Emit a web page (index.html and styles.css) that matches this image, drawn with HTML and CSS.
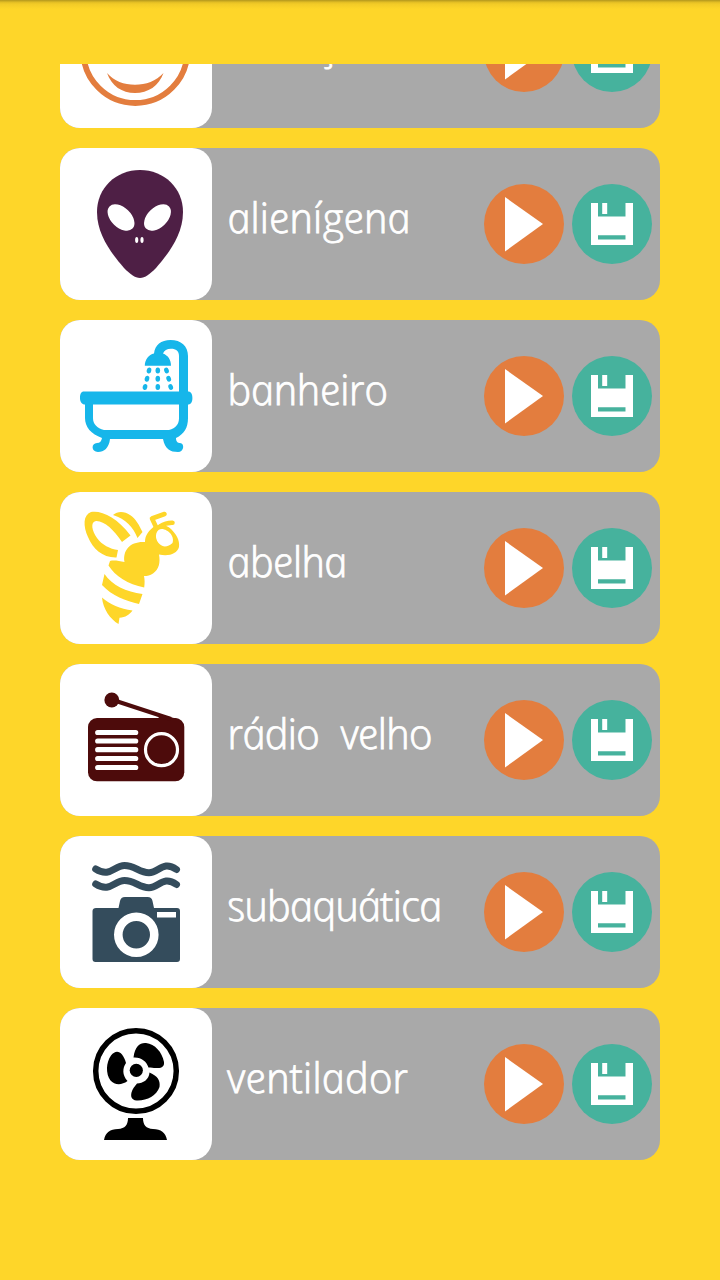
FILE: index.html
```
<!DOCTYPE html>
<html lang="pt">
<head>
<meta charset="utf-8">
<title>Sons</title>
<link rel="stylesheet" href="styles.css">
</head>
<body>
<svg class="defs" aria-hidden="true">
  <symbol id="play" viewBox="0 0 80 80"><path d="M21 13v54.500L59 40z"/></symbol>
  <symbol id="save" viewBox="0 0 80 80"><path fill-rule="evenodd" d="M19 19h7v13.500h27.500V19H61v42H19zM26 51.300h27.500v4.200H26z"/><path d="M30.200 19h5v11h-5z"/></symbol>
</svg>
<main class="list">
  <article class="row">
    <svg class="tile smile" viewBox="0 0 152 152"><circle cx="75.300" cy="75" r="52" fill="none" stroke="currentColor" stroke-width="5.800"/><path d="M47 97c7 8 17 11.800 28 11.800S96 105 103.500 97C99 110 88 117 75 117S51.500 110 47 97z"/></svg>
    <span class="label w-crianca">criança</span>
    <button class="btn play"><svg><use href="#play"/></svg></button>
    <button class="btn save"><svg><use href="#save"/></svg></button>
  </article>
  <article class="row">
    <svg class="tile alien" viewBox="0 0 152 152"><path d="M80 22C56 22 37 40 37 64c0 24 16 43 27 56 6 6 11 10 16 10s10-4 16-10c11-13 27-32 27-56 0-24-19-42-43-42z"/><g fill="#fff"><ellipse cx="61" cy="69.500" rx="16" ry="10" transform="rotate(44 61 69.500)"/><ellipse cx="97.500" cy="69.500" rx="16" ry="10" transform="rotate(-44 97.500 69.500)"/><ellipse cx="76.700" cy="92" rx="1.600" ry="3"/><ellipse cx="82" cy="92" rx="1.600" ry="3"/></g></svg>
    <span class="label w-alien">alienígena</span>
    <button class="btn play"><svg><use href="#play"/></svg></button>
    <button class="btn save"><svg><use href="#save"/></svg></button>
  </article>
  <article class="row">
    <svg class="tile bath" viewBox="0 0 152 152"><path d="M24 71.500h95V36c0-5-3-7.300-8-7.300-4 0-7 1.800-8 4.800 5 2 8 6 8 12.200H84.800c0-6 4-11 9.200-12.200C95 25 101 20 110.500 20 121 20 128 26 128 36v35.500c3 0 4.400 2.500 4.400 6.500s-1.400 6.500-4.400 6.500V98c0 10-4 16-12 20 0 4 2 5 4 5 5 .500 4 9-2 9-8 0-13-3-15-13H50c-1 9-6 13-12 13-7 0-7-9-1-9 3 0 4.500-2 5-5-11-4-17-11-17-20V84.500c-3 0-5-2.500-5-6.500s1-6.500 4-6.500zM33 84.500V98c0 6 4 10 11 12h65c7-2 10-6 10-12V84.500z"/><g><ellipse cx="89" cy="50.500" rx="2.300" ry="3" transform="rotate(12 89 50.500)"/><ellipse cx="97.800" cy="50.500" rx="2.300" ry="3"/><ellipse cx="106.500" cy="50.500" rx="2.300" ry="3" transform="rotate(-20 106.500 50.500)"/><ellipse cx="87" cy="58.700" rx="2.300" ry="3" transform="rotate(12 87 58.700)"/><ellipse cx="97.800" cy="58.700" rx="2.300" ry="3"/><ellipse cx="108.700" cy="58.700" rx="2.300" ry="3" transform="rotate(-20 108.700 58.700)"/><ellipse cx="85" cy="67" rx="2.300" ry="3" transform="rotate(12 85 67)"/><ellipse cx="97.800" cy="67" rx="2.300" ry="3"/><ellipse cx="110.700" cy="67" rx="2.300" ry="3" transform="rotate(-20 110.700 67)"/></g></svg>
    <span class="label w-bath">banheiro</span>
    <button class="btn play"><svg><use href="#play"/></svg></button>
    <button class="btn save"><svg><use href="#save"/></svg></button>
  </article>
  <article class="row">
    <svg class="tile bee" viewBox="0 0 152 152"><path fill-rule="evenodd" d="M31 20c10-2 26 5 39.500 23.500L62 50C54 38 44 28.500 36 29c-6 1-4 10 1 17 5 7 13 11 21 12l-1.500 7.500C43 66 33 57 28 45c-5-11-5-22 3-25z"/><path d="M53 23c5-4.500 12-3.500 17 0 6 4 9 10 12.500 17L77.500 46C73 35 66 27 53 23z"/><path fill-rule="evenodd" d="M50 69c4-1 9 0 14.500 1-2-12 6-21 20.500-20 0-7 4-12 10-16 6-2 12-1 16 3 5 5 9 11 8 18-2 7-10 9.500-20 7.500 1.500 8 0 15-6 19-3 2-5.500 2.500-9 2.500.800 3.500.800 7.500.200 11.500C68 92.500 55 84 48.500 73.500zM98.500 38c-4 4-3 10 1 14s9 2.500 13-1c2-5-2-11-6-12.500-3-2-6-2-8-.500z"/><path d="M96 35l-4-8.500 12.500-4.500M100 34.500q6-4 12.500-3.800" fill="none" stroke="currentColor" stroke-width="4.600" stroke-linecap="round" stroke-linejoin="round"/><path d="M44.500 82C52 93 66 100 82.500 102l-3.500 10C66 109 52 104 42 93zM42 105.500c8 7 18 11.500 30.500 13-3 4-7 7-13 7.200L58.500 132C50 127 43 117 42 105.500z"/></svg>
    <span class="label w-bee">abelha</span>
    <button class="btn play"><svg><use href="#play"/></svg></button>
    <button class="btn save"><svg><use href="#save"/></svg></button>
  </article>
  <article class="row">
    <svg class="tile radio" viewBox="0 0 152 152"><rect x="28" y="54" width="96.300" height="63.300" rx="9"/><circle cx="51.800" cy="36" r="7.400"/><path d="M56 37l55 18" stroke="currentColor" stroke-width="4"/><path d="M100 50.500l18 4.500H98z"/><path d="M37.700 68.500h38M37.700 77h38M37.700 85.700h38M37.700 94.500h38M37.700 103.500h38" stroke="#fff" stroke-width="5.200" stroke-linecap="round"/><circle cx="101.500" cy="85.700" r="16" fill="none" stroke="#fff" stroke-width="3.200"/></svg>
    <span class="label w-radio">rádio velho</span>
    <button class="btn play"><svg><use href="#play"/></svg></button>
    <button class="btn save"><svg><use href="#save"/></svg></button>
  </article>
  <article class="row">
    <svg class="tile camera" viewBox="0 0 152 152"><path d="M35.700 33C50 42 54 29.500 64.500 29.500S79 36.700 89 36.700 103 24 116.500 33.500M35.700 48C50 57 54 44.500 64.500 44.500S79 51.700 89 51.700 103 39 116.500 48.500" fill="none" stroke="currentColor" stroke-width="7" stroke-linecap="round"/><path d="M36 72h22.500l1.500-7c.800-2.700 2-4 5-4h22.500c3 0 4.500 1.300 5 4l1.500 7H117c2 0 3 1 3 3v48c0 2-1 3-3 3H35.500c-2 0-3-1-3-3V75c0-2 1.500-3 3.500-3z"/><circle cx="76.300" cy="98.700" r="18" fill="none" stroke="#fff" stroke-width="8.600"/><path d="M97 76h19v5.500H97z" fill="#fff"/></svg>
    <span class="label w-water">subaquática</span>
    <button class="btn play"><svg><use href="#play"/></svg></button>
    <button class="btn save"><svg><use href="#save"/></svg></button>
  </article>
  <article class="row">
    <svg class="tile fan" viewBox="0 0 152 152"><circle cx="76" cy="63" r="40.300" fill="none" stroke="currentColor" stroke-width="5.500"/><circle cx="76.300" cy="62.300" r="6.600"/><path d="M73.500 49.500C75 38 80 34.500 86 35c9 1 16 9 18 19 .500 4-2 6-6 6-4 .200-6-.200-9.500-.500-2-6-7-10.500-15-10zM89.500 64.500C98 68 100.500 73 99.500 79c-3 9-13 14-23 13.500-5-.500-6-4-5-8 1-3.500 3-6 5.500-9 6 0 12-4 12.500-11zM67.500 73c-6 4.500-13 4-17-.500-5-7-4.500-18 .500-25 4-5 8-4.500 11-1 2 3 3 5 4 8.500-3.500 5-4 12 1.500 18z"/><path d="M68 110h15c0 7 3 10.500 10 11 8 .500 12.500 3 14 11H44c1.500-8 6-10.500 14-11 7-.500 10-4 10-11z"/></svg>
    <span class="label w-fan">ventilador</span>
    <button class="btn play"><svg><use href="#play"/></svg></button>
    <button class="btn save"><svg><use href="#save"/></svg></button>
  </article>
</main>
</body>
</html>
```
FILE: styles.css
```
* { box-sizing: border-box; }
body {
  margin: 0;
  height: 1280px;
  padding: 64px 60px 0;
  overflow: hidden;
  background: linear-gradient(#b69a1e 0, #c4a520 1px, #e0bc24 2px, #f2cb27 4px, #fed629 9px) #fed629;
}
.defs { display: none; }
/* The scrolled list is clipped at its top edge. */
.list {
  height: 1096px;
  display: flex;
  flex-direction: column;
  justify-content: flex-end;
  gap: 20px;
  overflow: hidden;
}
.row {
  flex: none;
  height: 152px;
  display: flex;
  align-items: center;
  gap: 8px;
  padding-right: 8px;
  border-radius: 20px;
  background: #a9a9a9;
}
.tile {
  flex: none;
  width: 152px;
  height: 152px;
  border-radius: 20px;
  background: #fff;
  fill: currentColor;
}
.smile { color: #e37d3e; }
.alien { color: #4e1f45; }
.bath { color: #16b6ea; }
.bee { color: #fed629; }
.radio { color: #4d0b0b; }
.camera { color: #344c5c; }
.fan { color: #000; }
/* Counter-skewed italic gives upright single-storey letters. */
.label {
  flex: 1;
  min-width: 0;
  padding: 0 0 15px 8px;
  color: #fff;
  font: italic 300 42px/56px "Open Sans", "Noto Sans", sans-serif;
  -webkit-text-stroke: 0.8px #fff;
  white-space: nowrap;
  transform: skewX(12deg);
}
.w-crianca { padding-bottom: 19px; letter-spacing: -0.4px; }
.w-alien { letter-spacing: -0.25px; }
.w-bath { letter-spacing: -0.55px; }
.w-bee { letter-spacing: -0.9px; }
.w-radio { letter-spacing: -1px; word-spacing: 12px; }
.w-water { letter-spacing: -1px; }
.w-fan { letter-spacing: -0.1px; }
.btn {
  flex: none;
  width: 80px;
  height: 80px;
  padding: 0;
  border: 0;
  border-radius: 50%;
  color: #fff;
}
.btn svg { display: block; width: 80px; height: 80px; fill: currentColor; }
.play { background: #e37d3e; }
.save { background: #46b29d; }
```
